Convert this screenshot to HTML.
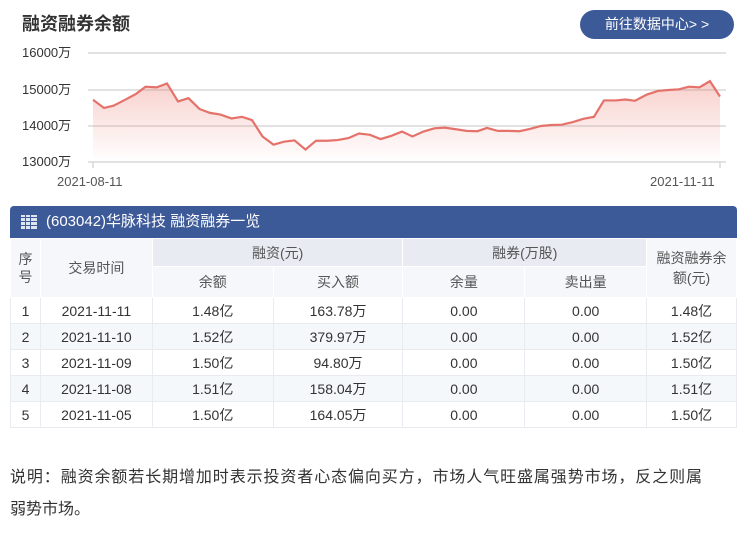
<!DOCTYPE html>
<html><head><meta charset="utf-8"><style>
body{margin:0;width:748px;height:544px;background:#fff;font-family:"Liberation Sans","Noto Sans CJK SC",sans-serif;color:#333;position:relative;overflow:hidden}
.t{position:absolute;left:22px;top:10px;font-size:18px;font-weight:bold;color:#333}
.btn{position:absolute;left:580px;top:10px;width:154px;height:29px;border-radius:15px;background:#3d5a98;color:#fff;font-size:14px;line-height:29px;text-align:center}
.yl{position:absolute;left:22px;font-size:13px;color:#333}
.xl{position:absolute;top:174px;font-size:13px;color:#555}
.tb{position:absolute;left:10px;top:206px;width:727px}
.bar{height:32px;background:#3d5a98;border-radius:4px 4px 0 0;color:#fff;font-size:15px;line-height:32px;padding-left:36px;position:relative}
.ic{position:absolute;left:11px;top:9px;width:16px;height:14px;background:
linear-gradient(90deg,transparent 4px,#3d5a98 4px,#3d5a98 5px,transparent 5px,transparent 9px,#3d5a98 9px,#3d5a98 10px,transparent 10px),
linear-gradient(0deg,transparent 3px,#3d5a98 3px,#3d5a98 4px,transparent 4px,transparent 7px,#3d5a98 7px,#3d5a98 8px,transparent 8px,transparent 11px,#3d5a98 11px,#3d5a98 12px,transparent 12px),#dfe5f0}
table{border-collapse:collapse;width:727px;font-size:14px;text-align:center}
td{height:25px;border:1px solid #e8ebef;padding:0;color:#333}
.h td{background:#f5f7fa;color:#555;border-color:#fff}
.g{background:#e8ecf2!important}
tr.e td{background:#f5f8fa}
.note{position:absolute;left:10px;top:462px;width:740px;font-size:16px;line-height:32px;color:#333;white-space:nowrap}
</style></head><body>
<div class="t">融资融券余额</div>
<div class="btn">前往数据中心&gt; &gt;</div>
<svg style="position:absolute;left:0;top:0" width="748" height="200">
<defs><linearGradient id="f" x1="0" y1="0" x2="0" y2="1"><stop offset="0" stop-color="#e9786d" stop-opacity=".35"/><stop offset="1" stop-color="#e9786d" stop-opacity="0"/></linearGradient></defs>
<g stroke="#d8d8d8" stroke-width="1.5"><line x1="88" y1="53" x2="726" y2="53"/><line x1="88" y1="90" x2="726" y2="90"/><line x1="88" y1="126" x2="726" y2="126"/><line x1="88" y1="162" x2="726" y2="162"/><line x1="93" y1="162" x2="93" y2="168"/><line x1="720" y1="162" x2="720" y2="168"/></g>
<g transform="translate(93,53) scale(0.4775,0.3273) translate(-195,-157)">
<path fill="url(#f)" d="M195,300 L218,325 238,318 262,300 285,282 305,260 328,262 350,250 373,305 395,295 418,328 440,340 462,345 485,357 507,352 528,362 550,412 573,437 595,428 617,424 640,452 662,425 685,425 707,423 730,417 752,403 775,407 797,420 820,410 842,397 864,412 887,397 910,387 932,385 955,390 977,395 1000,396 1020,386 1043,395 1065,395 1088,396 1110,389 1133,380 1155,377 1177,376 1200,368 1222,358 1244,352 1265,302 1290,302 1310,299 1330,303 1355,284 1378,273 1400,270 1422,268 1443,260 1465,262 1487,243 1508,290 L1508,490 L195,490Z"/>
<path fill="none" stroke="#e5726a" stroke-width="2.2" vector-effect="non-scaling-stroke" d="M195,300 L218,325 238,318 262,300 285,282 305,260 328,262 350,250 373,305 395,295 418,328 440,340 462,345 485,357 507,352 528,362 550,412 573,437 595,428 617,424 640,452 662,425 685,425 707,423 730,417 752,403 775,407 797,420 820,410 842,397 864,412 887,397 910,387 932,385 955,390 977,395 1000,396 1020,386 1043,395 1065,395 1088,396 1110,389 1133,380 1155,377 1177,376 1200,368 1222,358 1244,352 1265,302 1290,302 1310,299 1330,303 1355,284 1378,273 1400,270 1422,268 1443,260 1465,262 1487,243 1508,290"/>
</g></svg>
<div class="yl" style="top:42px">16000万</div>
<div class="yl" style="top:79px">15000万</div>
<div class="yl" style="top:115px">14000万</div>
<div class="yl" style="top:151px">13000万</div>
<div class="xl" style="left:57px">2021-08-11</div>
<div class="xl" style="left:650px">2021-11-11</div>
<div class="tb">
<div class="bar"><span class="ic"></span>(603042)华脉科技 融资融券一览</div>
<table>
<colgroup><col style="width:30px"><col style="width:112px"><col style="width:121px"><col style="width:130px"><col style="width:122px"><col style="width:122px"><col style="width:90px"></colgroup>
<tr class="h"><td rowspan="2" style="line-height:18px">序<br>号</td><td rowspan="2">交易时间</td><td colspan="2" class="g" style="height:27px">融资(元)</td><td colspan="2" class="g">融券(万股)</td><td rowspan="2" style="line-height:20px">融资融券余<br>额(元)</td></tr>
<tr class="h"><td style="height:30px">余额</td><td>买入额</td><td>余量</td><td>卖出量</td></tr>
<tr><td>1</td><td>2021-11-11</td><td>1.48亿</td><td>163.78万</td><td>0.00</td><td>0.00</td><td>1.48亿</td></tr>
<tr class="e"><td>2</td><td>2021-11-10</td><td>1.52亿</td><td>379.97万</td><td>0.00</td><td>0.00</td><td>1.52亿</td></tr>
<tr><td>3</td><td>2021-11-09</td><td>1.50亿</td><td>94.80万</td><td>0.00</td><td>0.00</td><td>1.50亿</td></tr>
<tr class="e"><td>4</td><td>2021-11-08</td><td>1.51亿</td><td>158.04万</td><td>0.00</td><td>0.00</td><td>1.51亿</td></tr>
<tr><td>5</td><td>2021-11-05</td><td>1.50亿</td><td>164.05万</td><td>0.00</td><td>0.00</td><td>1.50亿</td></tr>
</table></div>
<div class="note"><span style="letter-spacing:0.9px">说明：融资余额若长期增加时表示投资者心态偏向买方，市场人气旺盛属强势市场，反之则属</span><br>弱势市场。</div>
</body></html>
